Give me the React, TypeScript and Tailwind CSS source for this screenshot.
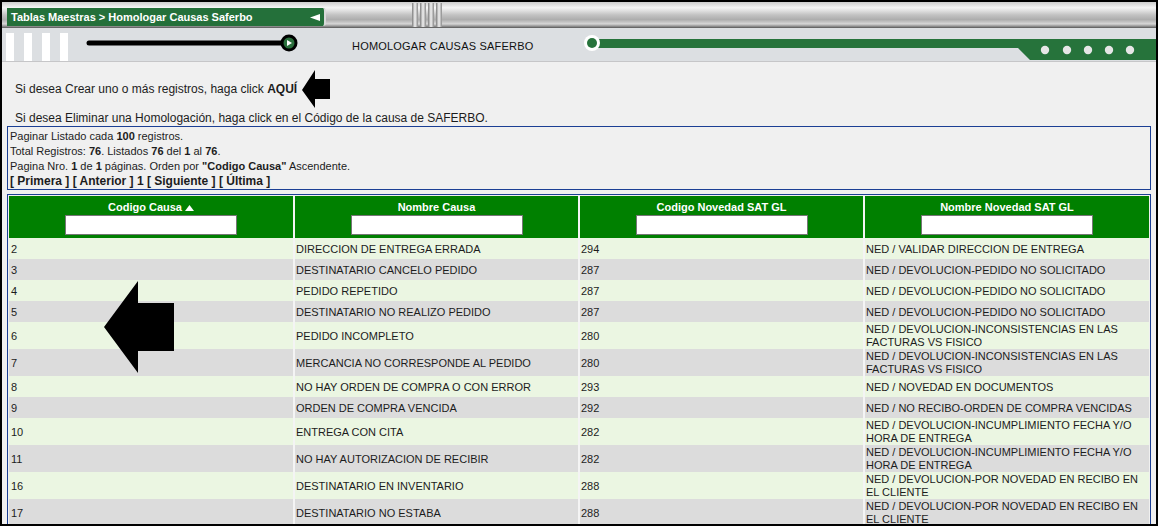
import React from 'react';

type Row = { code: string; name: string; sat: string; satName: string };

const rows: Row[] = [
  { code: '2', name: 'DIRECCION DE ENTREGA ERRADA', sat: '294', satName: 'NED / VALIDAR DIRECCION DE ENTREGA' },
  { code: '3', name: 'DESTINATARIO CANCELO PEDIDO', sat: '287', satName: 'NED / DEVOLUCION-PEDIDO NO SOLICITADO' },
  { code: '4', name: 'PEDIDO REPETIDO', sat: '287', satName: 'NED / DEVOLUCION-PEDIDO NO SOLICITADO' },
  { code: '5', name: 'DESTINATARIO NO REALIZO PEDIDO', sat: '287', satName: 'NED / DEVOLUCION-PEDIDO NO SOLICITADO' },
  { code: '6', name: 'PEDIDO INCOMPLETO', sat: '280', satName: 'NED / DEVOLUCION-INCONSISTENCIAS EN LAS FACTURAS VS FISICO' },
  { code: '7', name: 'MERCANCIA NO CORRESPONDE AL PEDIDO', sat: '280', satName: 'NED / DEVOLUCION-INCONSISTENCIAS EN LAS FACTURAS VS FISICO' },
  { code: '8', name: 'NO HAY ORDEN DE COMPRA O CON ERROR', sat: '293', satName: 'NED / NOVEDAD EN DOCUMENTOS' },
  { code: '9', name: 'ORDEN DE COMPRA VENCIDA', sat: '292', satName: 'NED / NO RECIBO-ORDEN DE COMPRA VENCIDAS' },
  { code: '10', name: 'ENTREGA CON CITA', sat: '282', satName: 'NED / DEVOLUCION-INCUMPLIMIENTO FECHA Y/O HORA DE ENTREGA' },
  { code: '11', name: 'NO HAY AUTORIZACION DE RECIBIR', sat: '282', satName: 'NED / DEVOLUCION-INCUMPLIMIENTO FECHA Y/O HORA DE ENTREGA' },
  { code: '16', name: 'DESTINATARIO EN INVENTARIO', sat: '288', satName: 'NED / DEVOLUCION-POR NOVEDAD EN RECIBO EN EL CLIENTE' },
  { code: '17', name: 'DESTINATARIO NO ESTABA', sat: '288', satName: 'NED / DEVOLUCION-POR NOVEDAD EN RECIBO EN EL CLIENTE' },
];

const headers = ['Codigo Causa', 'Nombre Causa', 'Codigo Novedad SAT GL', 'Nombre Novedad SAT GL'];

const Groove = () => (
  <div className="w-[6px] h-full bg-[linear-gradient(to_right,#7d7d7d,#f2f2f2_50%,#8a8a8a)]" />
);

export default function App() {
  return (
    <div className="w-[1159px] h-[526px] bg-white font-['Liberation_Sans',Arial,sans-serif]">
      <div className="relative w-[1158px] h-[526px] border-2 border-black bg-[#f0f0f0] overflow-hidden">
        {/* top metallic bar */}
        <div className="flex h-[26px] bg-[linear-gradient(to_bottom,#cdcdcd_0%,#f5f5f5_22%,#c2c2c2_50%,#adadad_68%,#d6d6d6_84%,#8c8c8c_94%,#555555_100%)]">
          <div className="ml-[5px] mt-[6px] flex h-[18px] w-[319px] items-center justify-between rounded-r-[3px] border-r-2 border-[#d9d9d9] bg-[#24703a] pl-[4px] pr-[4px]">
            <span className="text-[11px] font-bold leading-[18px] text-white">Tablas Maestras &gt; Homologar Causas Saferbo</span>
            <svg width="10" height="7" viewBox="0 0 10 7">
              <polygon points="0,3.5 10,0 10,7" fill="#ffffff" />
            </svg>
          </div>
          <div className="ml-[86px] flex h-full gap-[2px] py-[1px]">
            <Groove />
            <Groove />
            <Groove />
            <Groove />
          </div>
        </div>

        {/* second header row */}
        <div className="flex h-[34px] items-stretch border-b border-[#c6c6c8] bg-[#dcdfe2]">
          <div className="ml-[4px] flex shrink-0 gap-[10px] pt-[5px]">
            <div className="w-[8px] bg-white" />
            <div className="w-[8px] bg-white" />
            <div className="w-[8px] bg-white" />
            <div className="w-[8px] bg-white" />
          </div>
          <svg className="ml-[14px] shrink-0" width="218" height="34" viewBox="0 0 218 34">
            <line x1="7" y1="15" x2="204" y2="15" stroke="#000" strokeWidth="5" strokeLinecap="round" />
            <circle cx="207" cy="15" r="8.5" fill="#000" />
            <circle cx="207" cy="15" r="5.5" fill="#2a6f3c" />
            <polygon points="205,12 205,18 210,15" fill="#fff" />
          </svg>
          <div className="ml-[52px] flex w-[180px] shrink-0 items-center whitespace-nowrap pt-[3px] text-[11px] tracking-[0.2px] text-[#111]">
            HOMOLOGAR CAUSAS SAFERBO
          </div>
          <svg className="ml-[50px] shrink-0" width="574" height="34" viewBox="0 0 574 34">
            <polygon points="10,11 574,11 574,32 448,32 436,20 10,20" fill="#26733b" />
            <circle cx="10" cy="15" r="8" fill="#fff" />
            <circle cx="10" cy="15" r="5" fill="#26733b" />
            {[463, 485, 506, 527, 548].map((x) => (
              <circle key={x} cx={x} cy="22" r="4.2" fill="#e6e6e6" />
            ))}
          </svg>
        </div>

        {/* content */}
        <div className="pl-[5px] text-[#1c1c1c]">
          <div className="ml-[8px] mt-[8px] flex h-[38px] items-center text-[12px]">
            <span>
              Si desea Crear uno o más registros, haga click <b>AQUÍ</b>
            </span>
            <svg className="ml-[5px]" width="28" height="38" viewBox="0 0 28 38">
              <polygon points="0,20 13,0 13,9 28,9 28,29 13,29 13,38" fill="#000" />
            </svg>
          </div>
          <div className="ml-[8px] mt-[2px] h-[16px] text-[12px] leading-[16px]">
            Si desea Eliminar una Homologación, haga click en el Código de la causa de SAFERBO.
          </div>

          <div className="w-[1144px] border border-[#1b3f94] pl-[2px] pt-[2px] text-[11px] leading-[15px]">
            <div>
              Paginar Listado cada <b>100</b> registros.
            </div>
            <div>
              Total Registros: <b>76</b>. Listados <b>76</b> del <b>1</b> al <b>76</b>.
            </div>
            <div>
              Pagina Nro. <b>1</b> de <b>1</b> páginas. Orden por <b>"Codigo Causa"</b> Ascendente.
            </div>
            <div className="text-[12px] font-bold">[ Primera ] [ Anterior ] 1 [ Siguiente ] [ Última ]</div>
          </div>

          <div className="mt-[4px] w-[1144px] border border-[#1b3f94] p-px">
            <table className="w-[1140px] table-fixed border-collapse text-[11px]">
              <colgroup>
                <col className="w-[285px]" />
                <col className="w-[285px]" />
                <col className="w-[285px]" />
                <col className="w-[285px]" />
              </colgroup>
              <thead>
                <tr className="bg-[#008000]">
                  {headers.map((h, i) => (
                    <th
                      key={h}
                      className={`px-0 pt-[5px] pb-[3px] align-top font-bold leading-[13px] text-white ${i > 0 ? 'border-l-2 border-[#f4f4f4]' : ''}`}
                    >
                      <div className="flex items-center justify-center gap-[3px]">
                        <span>{h}</span>
                        {i === 0 && (
                          <svg width="9" height="6" viewBox="0 0 9 6">
                            <polygon points="0,6 4.5,0 9,6" fill="#fff" />
                          </svg>
                        )}
                      </div>
                      <div className="mx-auto mt-px h-[20px] w-[172px] border border-[#767676] bg-white" />
                    </th>
                  ))}
                </tr>
              </thead>
              <tbody>
                {rows.map((r, idx) => (
                  <tr key={r.code} className={idx % 2 === 0 ? 'bg-[#ebf6e2]' : 'bg-[#dcdcdc]'}>
                    <td className="h-[21px] pl-[2px] pt-px leading-[13px]">{r.code}</td>
                    <td className="h-[21px] border-l-2 border-[#f4f4f4] pl-px pt-px leading-[13px]">{r.name}</td>
                    <td className="h-[21px] border-l-2 border-[#f4f4f4] pl-px pt-px leading-[13px]">{r.sat}</td>
                    <td className="h-[21px] border-l-2 border-[#f4f4f4] pl-px pt-px leading-[13px]">{r.satName}</td>
                  </tr>
                ))}
              </tbody>
            </table>
          </div>
        </div>

        {/* big arrow over table */}
        <svg className="absolute left-[102px] top-[279px]" width="70" height="92" viewBox="0 0 70 92">
          <polygon points="0,46 34,0 34,22 70,22 70,70 34,70 34,92" fill="#000" />
        </svg>
      </div>
    </div>
  );
}
